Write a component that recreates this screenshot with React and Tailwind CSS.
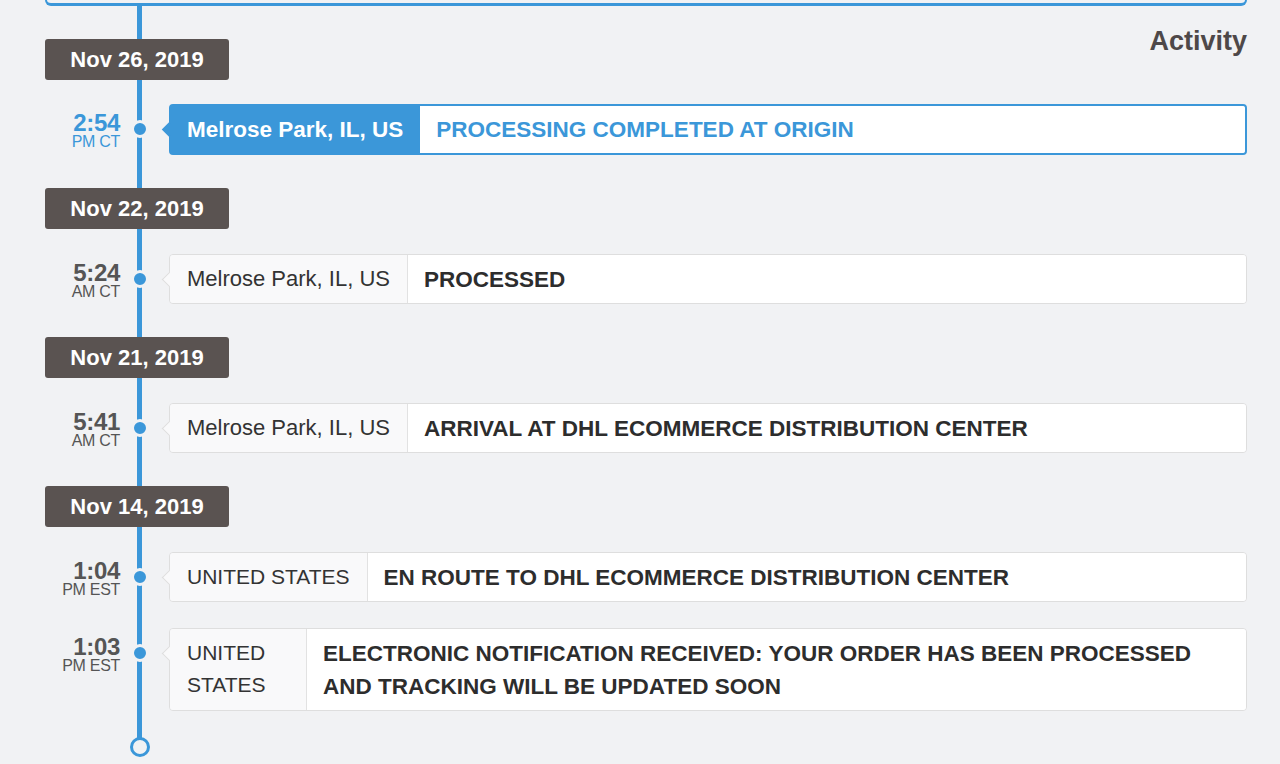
import React from "react";

const days = [
  {
    date: "Nov 26, 2019",
    events: [
      {
        time: "2:54",
        zone: "PM CT",
        loc: "Melrose Park, IL, US",
        status: "PROCESSING COMPLETED AT ORIGIN",
        active: true,
      },
    ],
  },
  {
    date: "Nov 22, 2019",
    events: [
      { time: "5:24", zone: "AM CT", loc: "Melrose Park, IL, US", status: "PROCESSED" },
    ],
  },
  {
    date: "Nov 21, 2019",
    events: [
      {
        time: "5:41",
        zone: "AM CT",
        loc: "Melrose Park, IL, US",
        status: "ARRIVAL AT DHL ECOMMERCE DISTRIBUTION CENTER",
      },
    ],
  },
  {
    date: "Nov 14, 2019",
    events: [
      {
        time: "1:04",
        zone: "PM EST",
        loc: "UNITED STATES",
        status: "EN ROUTE TO DHL ECOMMERCE DISTRIBUTION CENTER",
        caps: true,
      },
      {
        time: "1:03",
        zone: "PM EST",
        loc: "UNITED STATES",
        status:
          "ELECTRONIC NOTIFICATION RECEIVED: YOUR ORDER HAS BEEN PROCESSED\nAND TRACKING WILL BE UPDATED SOON",
        narrow: true,
        caps: true,
      },
    ],
  },
];

function DateBadge({ date }) {
  return (
    <div className="relative z-10 w-[184px] h-[41px] rounded-[3px] bg-[#5a5351] flex items-center justify-center text-white font-bold text-[22px] leading-none">
      {date}
    </div>
  );
}

function EventRow({ ev, className }) {
  const active = ev.active;
  return (
    <div className={"flex items-start " + className}>
      <div
        className={
          "w-[75px] mt-[8px] text-right " +
          (active ? "text-[#3b97d9]" : "text-[#555555]")
        }
      >
        <div className="text-[24px] leading-[22px] font-bold tracking-[-0.3px]">{ev.time}</div>
        <div className="text-[16px] leading-[16px] tracking-[-0.3px]">{ev.zone}</div>
      </div>
      <div className="w-[39px] flex justify-center mt-[16px]">
        <div className="relative z-10 w-[18px] h-[18px] rounded-full bg-[#3b97d9] border-[3px] border-[#f1f2f4]" />
      </div>
      <div
        className={
          "relative ml-[10px] flex-1 flex rounded-[4px] " +
          (active ? "border-2 border-[#3b97d9]" : "border border-[#dedede]")
        }
      >
        {active ? (
          <div className="absolute left-[-7px] top-[17.5px] w-[11px] h-[11px] rotate-45 bg-[#3b97d9]" />
        ) : (
          <div className="absolute left-[-6px] top-[18.5px] w-[11px] h-[11px] rotate-45 bg-[#f9f9fa] border-l border-b border-[#dedede]" />
        )}
        <div
          className={
            "relative shrink-0 leading-[32px] " +
            (active
              ? "bg-[#3b97d9] text-white font-bold text-[22.5px] pl-[16px] pr-[17px] py-[7.5px]"
              : "bg-[#f9f9fa] text-[#333333] px-[17px] py-[8px] border-r border-[#e2e2e2] rounded-l-[3px]") +
            (active ? "" : ev.caps ? " text-[21px]" : " text-[22px]") +
            (ev.narrow ? " w-[137px]" : " whitespace-nowrap")
          }
        >
          {ev.loc}
        </div>
        <div
          className={
            "flex-1 bg-white rounded-r-[3px] px-[16px] text-[22.5px] leading-[33px] font-bold whitespace-pre-line " +
            (active ? "text-[#3b97d9] py-[7px]" : "text-[#2d2d2d] py-[7.5px]")
          }
        >
          {ev.status}
        </div>
      </div>
    </div>
  );
}

export default function App() {
  return (
    <div
      className="min-h-screen bg-[#f1f2f4] overflow-hidden"
      style={{ fontFamily: '"Liberation Sans", Arial, Helvetica, sans-serif' }}
    >
      <div className="relative pl-[45px] pr-[33px]">
        <div className="h-[6px] border-x-2 border-b-[3px] border-[#3b97d9] rounded-b-[6px]" />
        <div className="absolute left-[137px] top-[6px] bottom-[10px] w-[5px] bg-[#3b97d9]" />

        {days.map((day, di) => (
          <div key={di}>
            <div className="flex items-start justify-between mt-[33px]">
              <DateBadge date={day.date} />
              {di === 0 && (
                <div className="-mt-[14px] text-[27px] leading-[32px] font-bold text-[#4e4848]">
                  Activity
                </div>
              )}
            </div>
            {day.events.map((ev, ei) => (
              <EventRow
                key={ei}
                ev={ev}
                className={ei === 0 ? (ev.active ? "mt-[24px]" : "mt-[25px]") : "mt-[26px]"}
              />
            ))}
          </div>
        ))}

        <div className="flex mt-[26px]">
          <div className="w-[75px]" />
          <div className="w-[39px] flex justify-center">
            <div className="relative z-10 w-[20px] h-[20px] rounded-full border-[3.5px] border-[#3b97d9] bg-[#f1f2f4]" />
          </div>
        </div>
      </div>
    </div>
  );
}
